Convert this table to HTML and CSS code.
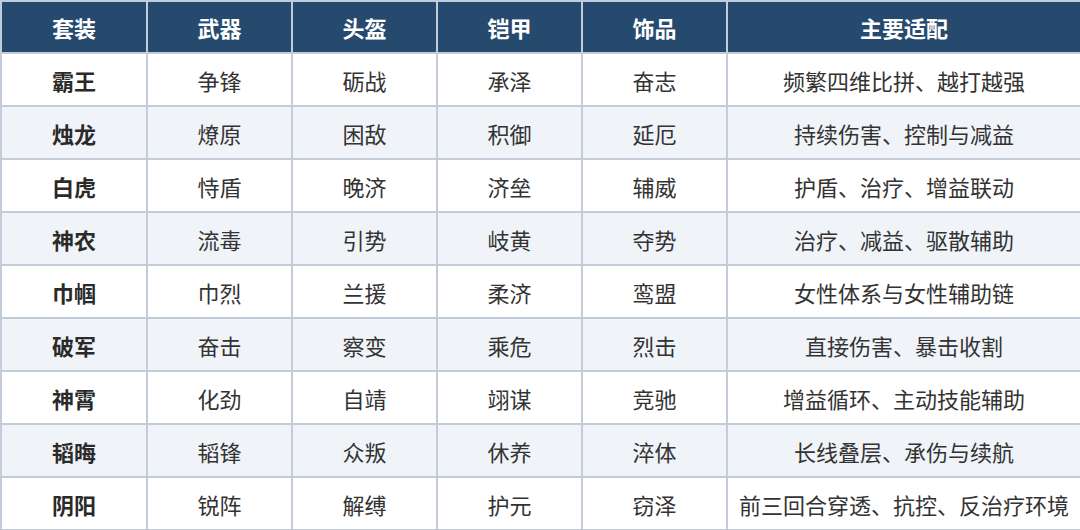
FILE: index.html
```html
<!DOCTYPE html>
<html lang="zh-CN">
<head>
<meta charset="utf-8">
<link rel="stylesheet" href="styles.css">
</head>
<body>
<table class="sets">
  <colgroup>
    <col class="c-set"><col class="c-std"><col class="c-std"><col class="c-std"><col class="c-std"><col class="c-wide">
  </colgroup>
  <thead>
    <tr><th>套装</th><th>武器</th><th>头盔</th><th>铠甲</th><th>饰品</th><th>主要适配</th></tr>
  </thead>
  <tbody>
    <tr><td class="name">霸王</td><td>争锋</td><td>砺战</td><td>承泽</td><td>奋志</td><td>频繁四维比拼、越打越强</td></tr>
    <tr><td class="name">烛龙</td><td>燎原</td><td>困敌</td><td>积御</td><td>延厄</td><td>持续伤害、控制与减益</td></tr>
    <tr><td class="name">白虎</td><td>恃盾</td><td>晚济</td><td>济垒</td><td>辅威</td><td>护盾、治疗、增益联动</td></tr>
    <tr><td class="name">神农</td><td>流毒</td><td>引势</td><td>岐黄</td><td>夺势</td><td>治疗、减益、驱散辅助</td></tr>
    <tr><td class="name">巾帼</td><td>巾烈</td><td>兰援</td><td>柔济</td><td>鸾盟</td><td>女性体系与女性辅助链</td></tr>
    <tr><td class="name">破军</td><td>奋击</td><td>察变</td><td>乘危</td><td>烈击</td><td>直接伤害、暴击收割</td></tr>
    <tr><td class="name">神霄</td><td>化劲</td><td>自靖</td><td>翊谋</td><td>竞驰</td><td>增益循环、主动技能辅助</td></tr>
    <tr><td class="name">韬晦</td><td>韬锋</td><td>众叛</td><td>休养</td><td>淬体</td><td>长线叠层、承伤与续航</td></tr>
    <tr><td class="name">阴阳</td><td>锐阵</td><td>解缚</td><td>护元</td><td>窃泽</td><td>前三回合穿透、抗控、反治疗环境</td></tr>
  </tbody>
</table>
</body>
</html>
```

FILE: styles.css
```css
html, body {
  margin: 0;
  padding: 0;
  background: #ffffff;
}
body {
  font-family: "Noto Sans CJK SC", "Noto Sans", sans-serif;
  color: #333333;
}
.sets {
  width: 1080px;
  border-collapse: collapse;
  table-layout: fixed;
}
.c-set { width: 146px; }
.c-std { width: 145px; }
.c-wide { width: 354px; }
.sets th,
.sets td {
  border: 2px solid #c3cdda;
  padding: 0;
  text-align: center;
  font-size: 22px;
  line-height: 30px;
  white-space: nowrap;
}
.sets th {
  background: #264a6e;
  color: #ffffff;
  font-weight: 700;
  height: 50px;
}
.sets td {
  height: 51px;
}
.sets tbody tr:nth-child(even) td {
  background: #f0f4f9;
}
.sets td.name {
  font-weight: 700;
  color: #2a2a2a;
}
```
